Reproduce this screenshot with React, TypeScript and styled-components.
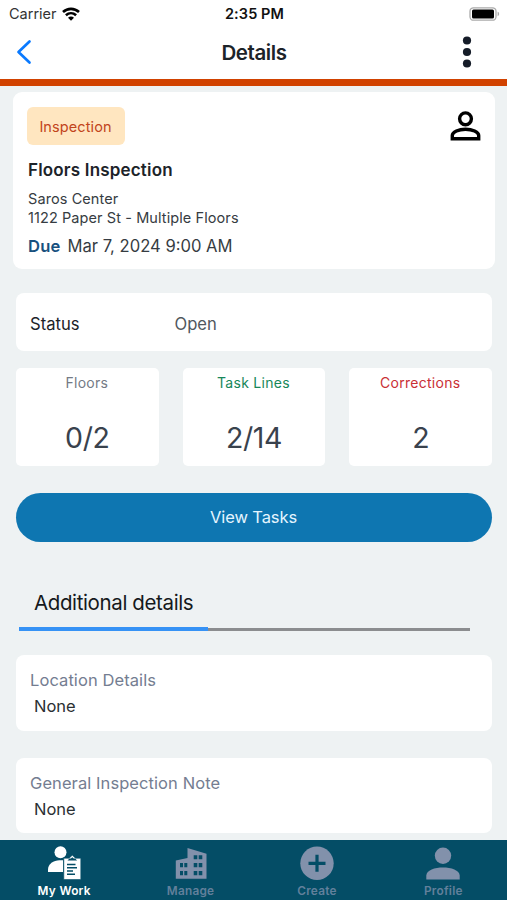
import React from "react";
import styled, { createGlobalStyle } from "styled-components";

const Global = createGlobalStyle`
  * { box-sizing: border-box; }
  body { margin: 0; background: #eef2f3; }
`;

const Screen = styled.div`
  width: 507px;
  height: 900px;
  display: flex;
  flex-direction: column;
  overflow: hidden;
  background: #eef2f3;
  font-family: Inter, sans-serif;
  color: #1c2329;
`;

const Top = styled.header`
  flex: none;
  height: 86px;
  background: #fff;
  border-bottom: 7px solid #d14200;
`;

const StatusBar = styled.div`
  height: 27px;
  display: grid;
  grid-template-columns: 1fr auto 1fr;
  align-items: center;
  padding: 0 7px 0 9px;
`;

const Carrier = styled.div`
  display: flex;
  align-items: center;
  gap: 5px;
  font-size: 14.5px;
  color: #333;
`;

const Clock = styled.div`
  font-size: 14.5px;
  font-weight: 600;
  color: #111;
  letter-spacing: 0.1px;
`;

const BatteryIcon = styled.svg`
  justify-self: end;
  display: block;
`;

const NavBar = styled.div`
  height: 52px;
  display: grid;
  grid-template-columns: 1fr auto 1fr;
  align-items: center;
  padding: 0 35px 2px 16px;
`;

const Title = styled.h1`
  margin: 0 0 0 20px;
  font-size: 20.5px;
  font-weight: 600;
  letter-spacing: -0.4px;
`;

const MenuIcon = styled.svg`
  justify-self: end;
  display: block;
`;

const Summary = styled.section`
  margin: 6px 12px 0 13px;
  height: 177px;
  border-radius: 9px;
  background: #fff;
  padding: 15px 14px 0 15px;
`;

const SummaryHead = styled.div`
  display: flex;
  justify-content: space-between;
  align-items: flex-start;
  height: 37px;
`;

const Tag = styled.span`
  margin-left: -1.5px;
  width: 98px;
  height: 38px;
  display: grid;
  place-items: center;
  border-radius: 6px;
  background: #ffe6c0;
  color: #c2441b;
  font-size: 14.5px;
  letter-spacing: 0.1px;
`;

const Name = styled.h2`
  margin: 15px 0 0;
  font-size: 17px;
  line-height: 22px;
  font-weight: 600;
  letter-spacing: 0.18px;
`;

const Address = styled.div`
  margin-top: 9px;
  font-size: 14.5px;
  line-height: 18.5px;
  letter-spacing: 0.09px;
  color: #363c42;
`;

const Due = styled.div`
  margin-top: 8px;
  display: flex;
  gap: 7px;
  font-size: 16.6px;
  line-height: 22px;
  color: #363c42;
`;

const DueLabel = styled.span`
  font-weight: 600;
  letter-spacing: 0.2px;
  color: #17507e;
`;

const Panel = styled.section<{ $top: number; $height: number }>`
  margin: ${(p) => p.$top}px 15px 0 16px;
  height: ${(p) => p.$height}px;
  border-radius: 8px;
  background: #fff;
  padding: 0 14px;
`;

const StatusPanel = styled(Panel)`
  display: grid;
  grid-template-columns: 144.5px 1fr;
  align-items: center;
  font-size: 16.6px;
  padding-top: 3px;
`;

const StatusValue = styled.span`
  color: #51575e;
`;

const Stats = styled.div`
  margin: 17px 15px 0 16px;
  display: grid;
  grid-template-columns: repeat(3, 1fr);
  gap: 24px;
`;

const Stat = styled.div`
  height: 98px;
  border-radius: 5px;
  background: #fff;
  display: flex;
  flex-direction: column;
  align-items: center;
`;

const StatLabel = styled.span<{ $color: string }>`
  margin: 5px 1px 0 0;
  font-size: 14px;
  line-height: 19px;
  letter-spacing: 0.28px;
  color: ${(p) => p.$color};
`;

const StatValue = styled.span`
  margin-top: 28px;
  font-size: 28.5px;
  line-height: 36px;
  letter-spacing: -0.4px;
  color: #39424d;
`;

const Button = styled.button`
  flex: none;
  margin: 27px 15px 0 16px;
  height: 49px;
  border: 0;
  border-radius: 25px;
  background: #0e76b1;
  color: #e4f5ff;
  font-family: inherit;
  font-size: 16.5px;
  letter-spacing: -0.1px;
  padding: 0 1px 2px 0;
`;

const Tabs = styled.div`
  margin: 47px 37px 0 19px;
  height: 42px;
  display: grid;
  grid-template-columns: 189px 1fr;
  align-items: end;
`;

const Tab = styled.div`
  height: 42px;
  padding-left: 15px;
  border-bottom: 4px solid #3692f5;
  font-size: 20.5px;
  line-height: 28px;
  letter-spacing: -0.38px;
  white-space: nowrap;
  color: #15191c;
`;

const TabRest = styled.div`
  height: 3px;
  background: #8b8d8f;
`;

const DetailPanel = styled(Panel)`
  padding-top: 14px;
  font-size: 16.5px;
  line-height: 22px;
`;

const DetailLabel = styled.div`
  letter-spacing: 0.08px;
  color: #747d91;
`;

const DetailValue = styled.div`
  margin: 4px 0 0 4px;
  color: #2b2f33;
`;

const BottomNav = styled.nav`
  flex: none;
  margin-top: auto;
  height: 60px;
  background: #044d66;
  display: grid;
  grid-template-columns: repeat(4, 126.4px);
  padding-left: 1px;
`;

const NavItem = styled.div<{ $active?: boolean }>`
  display: flex;
  flex-direction: column;
  align-items: center;
  padding-top: 5px;
  color: ${(p) => (p.$active ? "#fff" : "#8291ab")};
`;

const NavLabel = styled.span<{ $active?: boolean }>`
  font-size: 11.8px;
  line-height: 16px;
  margin-top: 3px;
  font-weight: 600;
  letter-spacing: ${(p) => (p.$active ? 0.3 : 0.25)}px;
  color: ${(p) => (p.$active ? "#fff" : "#62809b")};
`;

const WifiIcon = () => (
  <svg width="18" height="14" viewBox="0 0 18 14" fill="none" stroke="#000" strokeWidth="2.6">
    <path d="M1 5C5.500.800 12.500.800 17 5" />
    <path d="M3.900 8.200c3-2.700 7.200-2.700 10.200 0" />
    <path d="M6 10.700c1.700-1.500 4.300-1.500 6 0L9 13.800z" fill="#000" stroke="none" />
  </svg>
);

const MyWorkIcon = () => (
  <svg width="34" height="35" viewBox="0 0 34 35" fill="currentColor">
    <circle cx="13.500" cy="7.300" r="6" />
    <path d="M1 27v-2.500C1 19 6.500 15.200 12.500 15.200h3.500V27z" />
    <path d="M16.800 13.200h5.300l3.200-3 3.200 3h5.300v21.300h-17z" stroke="#044d66" strokeWidth=".6" />
    <path d="M20.500 15.600h9.600l-2-2h-1.400l-1.400-1.400-1.400 1.400h-1.400z" fill="#044d66" />
    <path d="M20 19.500h8.500M20 22.800h10M20 26h6M20 29.300h8" stroke="#044d66" strokeWidth="1.400" />
  </svg>
);

const ManageIcon = () => (
  <svg width="32" height="35" viewBox="0 0 32 35" fill="currentColor">
    <path
      fillRule="evenodd"
      d="M.8 15.500 12.500 13V3l19 5.700v25.100H.8zM5 18v4.300h3V18zm4.300 0v4.300h3V18zM5 26v4.300h3V26zm4.300 0v4.300h3V26zM18.700 10.300v4h3.600v-4zm5 0v4h3.600v-4zM18.700 18v4.300h3.600V18zm5 0v4.300h3.600V18zM18.700 26v4.300h3.600V26zm5 0v4.300h3.600V26z"
    />
  </svg>
);

const CreateIcon = () => (
  <svg width="34" height="35" viewBox="0 0 34 35">
    <circle cx="17" cy="18.300" r="16.700" fill="currentColor" />
    <path d="M17 9.800v17M8.500 18.300h17" stroke="#044d66" strokeWidth="3.200" />
  </svg>
);

const ProfileIcon = () => (
  <svg width="34" height="35" viewBox="0 0 34 35" fill="currentColor">
    <circle cx="17" cy="10.700" r="8.200" />
    <path d="M.3 34.600v-4C.3 25 9 22.400 17 22.400s16.700 2.600 16.700 8.200v4z" />
  </svg>
);

const stats = [
  { label: "Floors", value: "0/2", color: "#747a85" },
  { label: "Task Lines", value: "2/14", color: "#17875a" },
  { label: "Corrections", value: "2", color: "#c92f35" },
];

const details = [
  { label: "Location Details", value: "None", top: 24, height: 76 },
  { label: "General Inspection Note", value: "None", top: 27, height: 75 },
];

const navItems = [
  { label: "My Work", Icon: MyWorkIcon, active: true },
  { label: "Manage", Icon: ManageIcon },
  { label: "Create", Icon: CreateIcon },
  { label: "Profile", Icon: ProfileIcon },
];

export default function App() {
  return (
    <Screen>
      <Global />
      <Top>
        <StatusBar>
          <Carrier>
            Carrier
            <WifiIcon />
          </Carrier>
          <Clock>2:35 PM</Clock>
          <BatteryIcon width="31" height="14" viewBox="0 0 31 14">
            <rect x="1" y=".8" width="26" height="12.400" rx="3.500" fill="#fff" stroke="#aaa" strokeWidth="1.300" />
            <rect x="3" y="2.600" width="22" height="8.800" rx="1.500" fill="#000" />
            <path d="M28.600 4.800c2 .6 2 3.800 0 4.400z" fill="#aaa" />
          </BatteryIcon>
        </StatusBar>
        <NavBar>
          <svg width="16" height="26" viewBox="0 0 16 26" fill="none" stroke="#0a7aff" strokeWidth="2.700" strokeLinecap="round" strokeLinejoin="round">
            <path d="M13.500 2.500 2.500 13l11 10.500" />
          </svg>
          <Title>Details</Title>
          <MenuIcon width="10" height="32" viewBox="0 0 10 32" fill="#151c28">
            <circle cx="5" cy="4.500" r="4.100" />
            <circle cx="5" cy="16" r="4.100" />
            <circle cx="5" cy="27.500" r="4.100" />
          </MenuIcon>
        </NavBar>
      </Top>
      <Summary>
        <SummaryHead>
          <Tag>Inspection</Tag>
          <svg width="31" height="35" viewBox="0 0 31 35" fill="none" stroke="#000" strokeWidth="3.400">
            <circle cx="15.500" cy="11.800" r="5.900" />
            <path d="M2.300 31.800v-3.200c0-3.700 6.500-6.300 13.200-6.300s13.200 2.600 13.200 6.300v3.200z" />
          </svg>
        </SummaryHead>
        <Name>Floors Inspection</Name>
        <Address>
          Saros Center
          <br />
          1122 Paper St - Multiple Floors
        </Address>
        <Due>
          <DueLabel>Due</DueLabel>
          <span>Mar 7, 2024 9:00 AM</span>
        </Due>
      </Summary>
      <StatusPanel $top={24} $height={58}>
        <span>Status</span>
        <StatusValue>Open</StatusValue>
      </StatusPanel>
      <Stats>
        {stats.map((s) => (
          <Stat key={s.label}>
            <StatLabel $color={s.color}>{s.label}</StatLabel>
            <StatValue>{s.value}</StatValue>
          </Stat>
        ))}
      </Stats>
      <Button>View Tasks</Button>
      <Tabs>
        <Tab>Additional details</Tab>
        <TabRest />
      </Tabs>
      {details.map((d) => (
        <DetailPanel key={d.label} $top={d.top} $height={d.height}>
          <DetailLabel>{d.label}</DetailLabel>
          <DetailValue>{d.value}</DetailValue>
        </DetailPanel>
      ))}
      <BottomNav>
        {navItems.map(({ label, Icon, active }) => (
          <NavItem key={label} $active={active}>
            <Icon />
            <NavLabel $active={active}>{label}</NavLabel>
          </NavItem>
        ))}
      </BottomNav>
    </Screen>
  );
}
